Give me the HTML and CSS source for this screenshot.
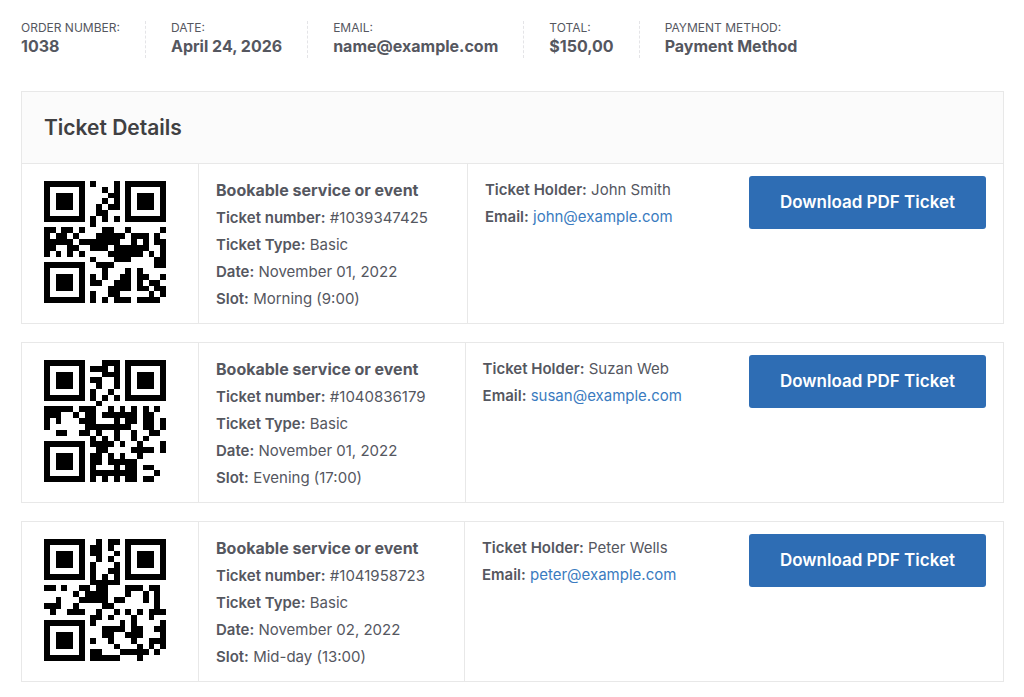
FILE: index.html
```html
<!DOCTYPE html>
<html lang="en">
<head>
  <meta charset="UTF-8">
  <meta name="viewport" content="width=device-width, initial-scale=1.0">
  <title>Ticket Details</title>
  <link rel="stylesheet" href="styles.css">
</head>
<body>
  <ul class="order-overview">
    <li>Order number: <strong>1038</strong></li>
    <li>Date: <strong>April 24, 2026</strong></li>
    <li>Email: <strong>name@example.com</strong></li>
    <li>Total: <strong>$150,00</strong></li>
    <li>Payment method: <strong>Payment Method</strong></li>
  </ul>

  <section class="tickets">
    <h2 class="tickets-title">Ticket Details</h2>

    <article class="ticket">
      <div class="ticket-code"><svg class="qr" data-code="first" viewBox="0 0 21 21" role="img" aria-label="QR code"></svg></div>
      <div class="ticket-info">
        <h3>Bookable service or event</h3>
        <p><b>Ticket number:</b> #1039347425</p>
        <p><b>Ticket Type:</b> Basic</p>
        <p><b>Date:</b> November 01, 2022</p>
        <p><b>Slot:</b> Morning (9:00)</p>
      </div>
      <div class="ticket-holder">
        <p><b>Ticket Holder:</b> John Smith</p>
        <p><b>Email:</b> <a href="mailto:john@example.com">john@example.com</a></p>
      </div>
      <div class="ticket-download"><button type="button" class="download-button">Download PDF Ticket</button></div>
    </article>

    <article class="ticket">
      <div class="ticket-code"><svg class="qr" data-code="second" viewBox="0 0 21 21" role="img" aria-label="QR code"></svg></div>
      <div class="ticket-info">
        <h3>Bookable service or event</h3>
        <p><b>Ticket number:</b> #1040836179</p>
        <p><b>Ticket Type:</b> Basic</p>
        <p><b>Date:</b> November 01, 2022</p>
        <p><b>Slot:</b> Evening (17:00)</p>
      </div>
      <div class="ticket-holder">
        <p><b>Ticket Holder:</b> Suzan Web</p>
        <p><b>Email:</b> <a href="mailto:susan@example.com">susan@example.com</a></p>
      </div>
      <div class="ticket-download"><button type="button" class="download-button">Download PDF Ticket</button></div>
    </article>

    <article class="ticket">
      <div class="ticket-code"><svg class="qr" data-code="third" viewBox="0 0 21 21" role="img" aria-label="QR code"></svg></div>
      <div class="ticket-info">
        <h3>Bookable service or event</h3>
        <p><b>Ticket number:</b> #1041958723</p>
        <p><b>Ticket Type:</b> Basic</p>
        <p><b>Date:</b> November 02, 2022</p>
        <p><b>Slot:</b> Mid-day (13:00)</p>
      </div>
      <div class="ticket-holder">
        <p><b>Ticket Holder:</b> Peter Wells</p>
        <p><b>Email:</b> <a href="mailto:peter@example.com">peter@example.com</a></p>
      </div>
      <div class="ticket-download"><button type="button" class="download-button">Download PDF Ticket</button></div>
    </article>
  </section>

  <script src="qr.js"></script>
</body>
</html>
```
FILE: styles.css
```css
* {
  box-sizing: border-box;
}
body {
  margin: 0;
  padding: 21px 20px 14px 21px;
  font-family: Inter, "Liberation Sans", sans-serif;
  font-size: 15px;
  line-height: 27px;
  color: #55575f;
  background: #fff;
}
h2, h3, p {
  margin: 0;
}
b {
  font-weight: 600;
}
a {
  color: #3a7bc0;
  text-decoration: none;
}
.order-overview {
  display: flex;
  flex-wrap: wrap;
  margin: 0 0 33px;
  padding: 0;
  list-style: none;
}
.order-overview li {
  margin-right: 25px;
  padding-right: 25px;
  border-right: 1px dashed #e4e4e7;
  font-size: 12px;
  line-height: 13px;
  text-transform: uppercase;
}
.order-overview li:last-child {
  margin-right: 0;
  padding-right: 0;
  border-right: 0;
}
.order-overview strong {
  display: block;
  font-size: 16px;
  font-weight: 700;
  line-height: 24px;
  text-transform: none;
}
.tickets-title {
  padding: 22px;
  border: 1px solid #e8e8e8;
  border-bottom: 0;
  background: #fbfbfb;
  font-size: 21px;
  font-weight: 600;
  line-height: 27px;
  color: #404042;
}
.ticket {
  display: flex;
  margin-bottom: 18px;
  border: 1px solid #e8e8e8;
}
.ticket:last-child {
  margin-bottom: 0;
}
.ticket-code {
  padding: 17px 32px 20px 22px;
  border-right: 1px solid #e8e8e8;
}
.qr {
  display: block;
  width: 122px;
  height: 122px;
}
.ticket-info {
  padding: 12px 39px 11px 17px;
  border-right: 1px solid #e8e8e8;
}
.ticket-info h3 {
  font-size: 16px;
  font-weight: 700;
  line-height: 28px;
}
.ticket-holder {
  flex: 1;
  padding: 12px 17px;
}
.ticket-download {
  padding: 12px 17px;
}
.download-button {
  padding: 13px 31px;
  border: 0;
  border-radius: 3px;
  background: #2e6db4;
  color: #fff;
  font-family: inherit;
  font-size: 17px;
  font-weight: 600;
  line-height: 27px;
  cursor: pointer;
}
.download-button:hover {
  background: #275f9e;
}
```
FILE: qr.js
```js
// one string per row, 1 = dark module
const codes = {
  first: [
    '111111101000101111111',
    '100000100010101000001',
    '101110100001101011101',
    '101110100010101011101',
    '101110100101101011101',
    '100000100110001000001',
    '111111101010101111111',
    '000000001000000000000',
    '110110100011001000001',
    '101101000111110111010',
    '111110111111100101011',
    '110011001110111111001',
    '101010100001111110101',
    '000000001000111000011',
    '111111100111000000011',
    '100000100010001010000',
    '101110101010011011001',
    '101110101100111010110',
    '101110100001111011011',
    '100000101001100000101',
    '111111101010111011110'
  ],
  second: [
    '111111100011101111111',
    '100000101110101000001',
    '101110100011101011101',
    '101110101100101011101',
    '101110100100101011101',
    '100000101001001000001',
    '111111101010101111111',
    '000000000100000000000',
    '111110111001010101010',
    '111001011011111101100',
    '101000111000101101101',
    '100000011111111001101',
    '001100110100100100110',
    '000000001010100101000',
    '111111101111010010001',
    '100000100110000111101',
    '101110101101010010000',
    '101110101101111100000',
    '101110101000101101100',
    '100000101111111100010',
    '111111101010101101100'
  ],
  third: [
    '111111100101101111111',
    '100000101101001000001',
    '101110101100101011101',
    '101110100101001011101',
    '101110101000101011101',
    '100000101001101000001',
    '111111101010101111111',
    '000000001111100000000',
    '110100110110001110110',
    '000001011110001001010',
    '001000111110110001010',
    '111001000011000000010',
    '010011100100101010111',
    '000000001101000100100',
    '111111101000010100001',
    '100000100011110110011',
    '101110100011001110001',
    '101110101001000100111',
    '101110100000100010101',
    '100000101100011111010',
    '111111101111100010000'
  ]
};

document.querySelectorAll('.qr').forEach((svg) => {
  let d = '';
  codes[svg.dataset.code].forEach((row, y) => {
    for (const run of row.matchAll(/1+/g)) {
      d += `M${run.index} ${y}h${run[0].length}v1h-${run[0].length}z`;
    }
  });
  const path = document.createElementNS('http://www.w3.org/2000/svg', 'path');
  path.setAttribute('d', d);
  path.setAttribute('shape-rendering', 'crispEdges');
  svg.appendChild(path);
});
```
